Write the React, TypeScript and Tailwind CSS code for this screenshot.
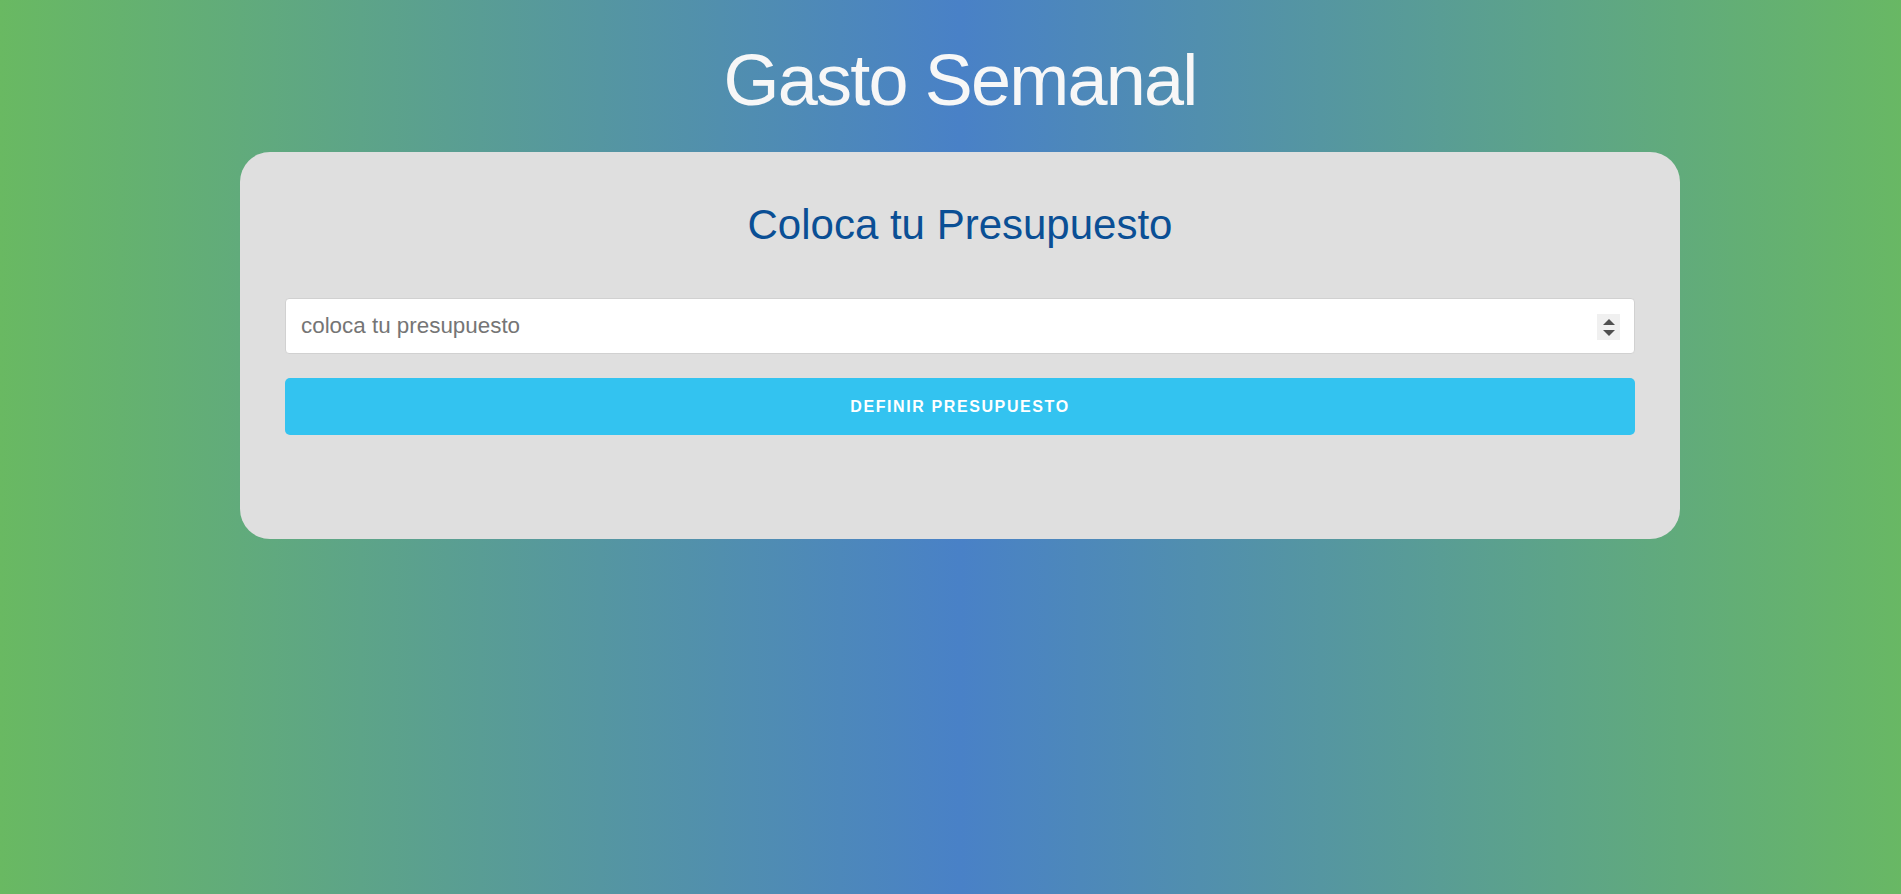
import { useState } from 'react';

export default function App() {
  const [budget, setBudget] = useState('');

  const handleSubmit = (e: React.FormEvent) => {
    e.preventDefault();
  };

  const step = (d: number) => {
    const n = Number(budget || 0) + d;
    setBudget(String(n));
  };

  return (
    <div className="min-h-screen w-full bg-[linear-gradient(to_right,#69b962_0px,#4981c7_960px,#69b962_1920px)] pl-[19px] font-['Liberation_Sans',Arial,sans-serif]">
      <div className="flex flex-col items-center">
        <h1 className="mt-[44px] text-[72px] leading-none tracking-[-1.8px] text-[#f7f7f7]">Gasto Semanal</h1>

        <div className="mt-[36px] w-[1440px] rounded-[30px] bg-[#dfdfdf] px-[45px] pt-[52px] pb-[104px]">
          <h2 className="text-center text-[42px] leading-none text-[#0a4f95]">Coloca tu Presupuesto</h2>

          <form onSubmit={handleSubmit} className="mt-[52px] flex flex-col gap-[24px]">
            <div className="relative">
              <input
                type="number"
                value={budget}
                onChange={(e) => setBudget(e.target.value)}
                placeholder="coloca tu presupuesto"
                className="h-[56px] w-full appearance-none rounded-[4px] border border-[#d1d1d1] bg-white pl-[15px] pr-[50px] text-[22.4px] text-[#333] outline-none placeholder:text-[#757575] [&::-webkit-inner-spin-button]:appearance-none [&::-webkit-outer-spin-button]:appearance-none"
              />
              {/* spin buttons */}
              <div className="absolute right-[15px] top-[16px] flex h-[26px] w-[23px] flex-col items-center justify-center gap-[5px] bg-[#f0f0f0]">
                <svg width="12" height="6" viewBox="0 0 12 6" onClick={() => step(1)}>
                  <path d="M6 0L12 6H0Z" fill="#505050" />
                </svg>
                <svg width="12" height="6" viewBox="0 0 12 6" onClick={() => step(-1)}>
                  <path d="M0 0H12L6 6Z" fill="#505050" />
                </svg>
              </div>
            </div>
            <button
              type="submit"
              className="h-[57px] w-full rounded-[5px] bg-[#33c3f0] text-[16px] font-bold uppercase tracking-[1.6px] text-white"
            >
              Definir Presupuesto
            </button>
          </form>
        </div>
      </div>
    </div>
  );
}
